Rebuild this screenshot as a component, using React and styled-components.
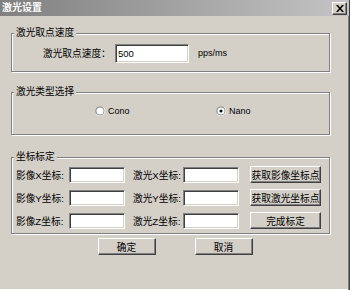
import React from 'react';
import styled, { createGlobalStyle } from 'styled-components';

const GlobalStyle = createGlobalStyle`
    body {
        margin: 0;
        background: #d4d0c8;
        font-family: "Liberation Sans", "Noto Sans CJK SC", sans-serif;
    }
`;

const FONT = `"Liberation Sans", "Noto Sans CJK SC", sans-serif`;

const Window = styled.div`
    width: 350px;
    height: 290px;
    box-sizing: border-box;
    background: #d4d0c8;
    border-right: 1px solid #404040;
    box-shadow: inset -1px 0 0 #808080, inset 0 -1px 0 #ffffff;
    display: flex;
    flex-direction: column;
    overflow: hidden;
    font-family: ${FONT};
    font-size: 9.7px;
    color: #000;
`;

const TitleBar = styled.div`
    height: 16px;
    flex: none;
    display: flex;
    align-items: center;
    justify-content: space-between;
    padding: 0 2px 0 2px;
    background: linear-gradient(to right, #808080, #c4c4c4);
`;

const Title = styled.span`
    color: #ffffff;
    font-weight: bold;
    font-size: 10px;
    line-height: 16px;
`;

const CloseButton = styled.button`
    width: 15px;
    height: 13px;
    padding: 0;
    margin: 1px 0 0 0;
    box-sizing: border-box;
    display: flex;
    align-items: center;
    justify-content: center;
    background: #d4d0c8;
    border: 1px solid;
    border-color: #ffffff #404040 #404040 #ffffff;
    box-shadow: inset -1px -1px 0 #808080;
`;

const Group = styled.fieldset`
    width: 319px;
    box-sizing: border-box;
    margin: ${({ $mt }) => $mt}px 0 0 11px;
    padding: ${({ $pt }) => $pt}px 0 ${({ $pb }) => $pb}px 0;
    border: 1px solid #808080;
    box-shadow: inset 1px 1px 0 #ffffff, 1px 1px 0 #ffffff;
    min-inline-size: 0;
`;

const Legend = styled.legend`
    margin-left: 2px;
    padding: 0 2px;
    font-size: 9.7px;
    line-height: 14px;
    background: #d4d0c8;
`;

const SpeedRow = styled.div`
    height: 26px;
    display: flex;
    align-items: center;
    padding-left: 31px;
`;

const SpeedLabel = styled.span`
    width: 72px;
`;

const TextBox = styled.input`
    width: ${({ $w }) => $w}px;
    height: ${({ $h }) => $h}px;
    box-sizing: border-box;
    margin: 0;
    padding: 0 2px;
    font-family: ${FONT};
    font-size: 9.5px;
    background: #ffffff;
    border: 1px solid;
    border-color: #808080 #ffffff #ffffff #808080;
    box-shadow: inset 1px 1px 0 #404040, inset -1px -1px 0 #d4d0c8;
    outline: none;
`;

const Unit = styled.span`
    margin-left: 9px;
    font-size: 9px;
`;

const RadioRow = styled.div`
    height: 24px;
    display: grid;
    grid-template-columns: 121px auto;
    align-items: center;
    padding-left: 83px;
`;

const RadioItem = styled.label`
    display: flex;
    align-items: center;
    gap: 3px;
    font-size: 9px;
`;

const CalibGrid = styled.div`
    display: grid;
    grid-template-columns: 53px 64px 50px 67px 71px;
    grid-auto-rows: 17px;
    row-gap: 6px;
    align-items: center;
    padding-left: 4px;
`;

const WinButton = styled.button`
    width: ${({ $w }) => $w}px;
    height: 17px;
    box-sizing: border-box;
    margin: 0;
    padding: 0;
    font-family: ${FONT};
    font-size: 9.7px;
    color: #000;
    background: #d4d0c8;
    border: 1px solid;
    border-color: #ffffff #404040 #404040 #ffffff;
    box-shadow: inset -1px -1px 0 #808080;
`;

const Footer = styled.div`
    display: flex;
    justify-content: center;
    gap: 39px;
    margin-top: 4px;
    padding-left: 1px;
`;

const RadioIcon = ({ checked }) => (
    <svg width="10" height="10" viewBox="0 0 12 12">
        <circle cx="6" cy="6" r="5.5" fill="#808080" />
        <path d="M1.5 9.8 A5.5 5.5 0 0 0 10 10.2 A5.5 5.5 0 0 0 9.8 1.5" fill="none" stroke="#ffffff" strokeWidth="1" />
        <circle cx="6" cy="6" r="4.3" fill="#ffffff" />
        {checked && <circle cx="6" cy="6" r="1.8" fill="#000" />}
    </svg>
);

const CloseIcon = () => (
    <svg width="8" height="7" viewBox="0 0 8 7">
        <path d="M0 0 L2 0 L4 2.5 L6 0 L8 0 L5 3.5 L8 7 L6 7 L4 4.5 L2 7 L0 7 L3 3.5 Z" fill="#000" />
    </svg>
);

const rows = [
    { a: '影像X坐标:', b: '激光X坐标:', btn: '获取影像坐标点' },
    { a: '影像Y坐标:', b: '激光Y坐标:', btn: '获取激光坐标点' },
    { a: '影像Z坐标:', b: '激光Z坐标:', btn: '完成标定' },
];

const App = () => {
    return (
        <>
            <GlobalStyle />
            <Window>
                <TitleBar>
                    <Title>激光设置</Title>
                    <CloseButton>
                        <CloseIcon />
                    </CloseButton>
                </TitleBar>

                <Group $mt={10} $pt={0} $pb={5}>
                    <Legend>激光取点速度</Legend>
                    <SpeedRow>
                        <SpeedLabel>激光取点速度：</SpeedLabel>
                        <TextBox $w={74} $h={19} defaultValue="500" />
                        <Unit>pps/ms</Unit>
                    </SpeedRow>
                </Group>

                <Group $mt={13} $pt={0} $pb={11}>
                    <Legend>激光类型选择</Legend>
                    <RadioRow>
                        <RadioItem>
                            <RadioIcon />
                            Cono
                        </RadioItem>
                        <RadioItem>
                            <RadioIcon checked />
                            Nano
                        </RadioItem>
                    </RadioRow>
                </Group>

                <Group $mt={15} $pt={2} $pb={4}>
                    <Legend>坐标标定</Legend>
                    <CalibGrid>
                        {rows.map((r) => (
                            <React.Fragment key={r.a}>
                                <span>{r.a}</span>
                                <TextBox $w={56} $h={16} />
                                <span>{r.b}</span>
                                <TextBox $w={56} $h={16} />
                                <WinButton $w={71}>{r.btn}</WinButton>
                            </React.Fragment>
                        ))}
                    </CalibGrid>
                </Group>

                <Footer>
                    <WinButton $w={58}>确定</WinButton>
                    <WinButton $w={58}>取消</WinButton>
                </Footer>
            </Window>
        </>
    );
};

export default App;
